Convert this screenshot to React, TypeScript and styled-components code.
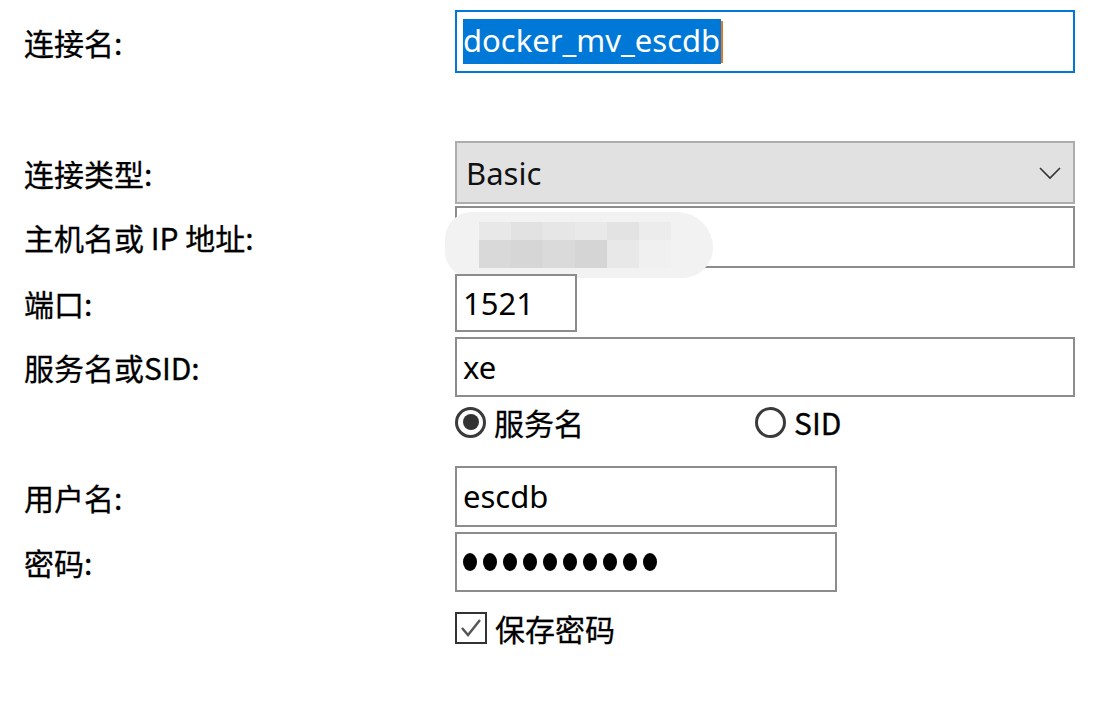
import React from "react";
import styled, { createGlobalStyle } from "styled-components";

const GlobalStyle = createGlobalStyle`
  html, body {
    margin: 0;
    padding: 0;
    background: #ffffff;
  }
  body {
    font-family: "Noto Sans", "Noto Sans CJK SC", sans-serif;
    color: #000;
  }
`;

const Form = styled.div`
  width: 1106px;
  height: 719px;
  box-sizing: border-box;
  padding: 10px 0 0 24px;
  display: flex;
  flex-direction: column;
`;

const Row = styled.div<{ $top?: number; $h: number }>`
  display: flex;
  align-items: center;
  margin-top: ${(p) => p.$top ?? 0}px;
  height: ${(p) => p.$h}px;
`;

const Label = styled.div`
  width: 431px;
  flex: none;
  font-family: "Noto Sans CJK SC", "Noto Sans", sans-serif;
  font-size: 30px;
  font-weight: 400;
  line-height: 1;
  color: #000;
  -webkit-text-stroke: 0.3px #000;
`;

const Field = styled.div<{ $w: number; $focus?: boolean }>`
  position: relative;
  box-sizing: border-box;
  width: ${(p) => p.$w}px;
  height: 100%;
  border: 2px solid ${(p) => (p.$focus ? "#0078d7" : "#8c8c8c")};
  background: #fff;
  display: flex;
  align-items: center;
  padding-left: 6px;
  font-size: 31px;
  line-height: 1;
`;

const Selected = styled.span`
  background: #0078d7;
  color: #fff;
  padding: 6px 1px 8px 0;
`;

const Caret = styled.span`
  display: inline-block;
  width: 2px;
  height: 42px;
  background: #e0762a;
`;

const Select = styled.div`
  box-sizing: border-box;
  width: 620px;
  height: 100%;
  border: 2px solid #adadad;
  background: #e1e1e1;
  display: flex;
  align-items: center;
  justify-content: space-between;
  padding: 0 12px 0 9px;
  font-size: 31px;
  color: #111;
`;

const Mosaic = styled.div`
  position: absolute;
  left: -12px;
  top: 4px;
  width: 268px;
  height: 66px;
  border-radius: 30px 40px 34px 30px;
  background: #f2f2f2;
  display: grid;
  grid-template-columns: repeat(6, 32px);
  grid-template-rows: 18px 28px;
  padding: 10px 0 0 34px;
  box-sizing: border-box;
`;

const Cell = styled.div<{ $c: string }>`
  background: ${(p) => p.$c};
`;

const Dots = styled.div`
  display: flex;
  gap: 6px;
`;

const Dot = styled.span`
  width: 14px;
  height: 18px;
  border-radius: 50%;
  background: #000;
`;

const Choice = styled.div<{ $w?: number }>`
  display: flex;
  align-items: center;
  gap: 8px;
  width: ${(p) => (p.$w ? `${p.$w}px` : "auto")};
  font-family: "Noto Sans CJK SC", "Noto Sans", sans-serif;
  font-size: 30px;
  font-weight: 400;
  line-height: 1;
  color: #000;
  -webkit-text-stroke: 0.3px #000;
`;

const Radio = styled.span<{ $on?: boolean }>`
  box-sizing: border-box;
  width: 31px;
  height: 31px;
  border-radius: 50%;
  border: 3px solid #3a3a3a;
  display: flex;
  align-items: center;
  justify-content: center;
  &::after {
    content: "";
    display: ${(p) => (p.$on ? "block" : "none")};
    width: 16px;
    height: 16px;
    border-radius: 50%;
    background: #333;
  }
`;

const Check = styled.span`
  box-sizing: border-box;
  width: 32px;
  height: 32px;
  border: 2px solid #333;
  display: flex;
  align-items: center;
  justify-content: center;
`;

const Indent = styled.div`
  width: 431px;
  flex: none;
`;

const mosaic = [
  "#e8e8e8", "#e2e2e2", "#e6e6e6", "#e9e9e9", "#e3e3e3", "#ececec",
  "#d9d9d9", "#d6d6d6", "#dadada", "#d5d5d5", "#e8e8e8", "#f0f0f0",
];

export default function App() {
  return (
    <>
      <GlobalStyle />
      <Form>
        <Row $h={63}>
          <Label>连接名:</Label>
          <Field $w={620} $focus>
            <Selected>docker_mv_escdb</Selected>
            <Caret />
          </Field>
        </Row>
        <Row $top={68} $h={63}>
          <Label>连接类型:</Label>
          <Select>
            <span>Basic</span>
            <svg width="22" height="14" viewBox="0 0 22 14">
              <polyline points="1,2 11,12 21,2" fill="none" stroke="#333" strokeWidth="1.6" />
            </svg>
          </Select>
        </Row>
        <Row $top={2} $h={62}>
          <Label>主机名或 IP 地址:</Label>
          <Field $w={620}>
            <Mosaic>
              {mosaic.map((c, i) => (
                <Cell key={i} $c={c} />
              ))}
            </Mosaic>
          </Field>
        </Row>
        <Row $top={6} $h={58}>
          <Label>端口:</Label>
          <Field $w={122}>1521</Field>
        </Row>
        <Row $top={5} $h={60}>
          <Label>服务名或SID:</Label>
          <Field $w={620}>xe</Field>
        </Row>
        <Row $top={8} $h={34}>
          <Indent />
          <Choice $w={300}>
            <Radio $on />
            服务名
          </Choice>
          <Choice>
            <Radio />
            SID
          </Choice>
        </Row>
        <Row $top={27} $h={61}>
          <Label>用户名:</Label>
          <Field $w={382}>escdb</Field>
        </Row>
        <Row $top={5} $h={60}>
          <Label>密码:</Label>
          <Field $w={382}>
            <Dots>
              {Array.from({ length: 10 }).map((_, i) => (
                <Dot key={i} />
              ))}
            </Dots>
          </Field>
        </Row>
        <Row $top={19} $h={34}>
          <Indent />
          <Choice>
            <Check>
              <svg width="24" height="24" viewBox="0 0 24 24">
                <polyline points="3,12 9,19 21,4" fill="none" stroke="#555" strokeWidth="2.4" />
              </svg>
            </Check>
            保存密码
          </Choice>
        </Row>
      </Form>
    </>
  );
}
